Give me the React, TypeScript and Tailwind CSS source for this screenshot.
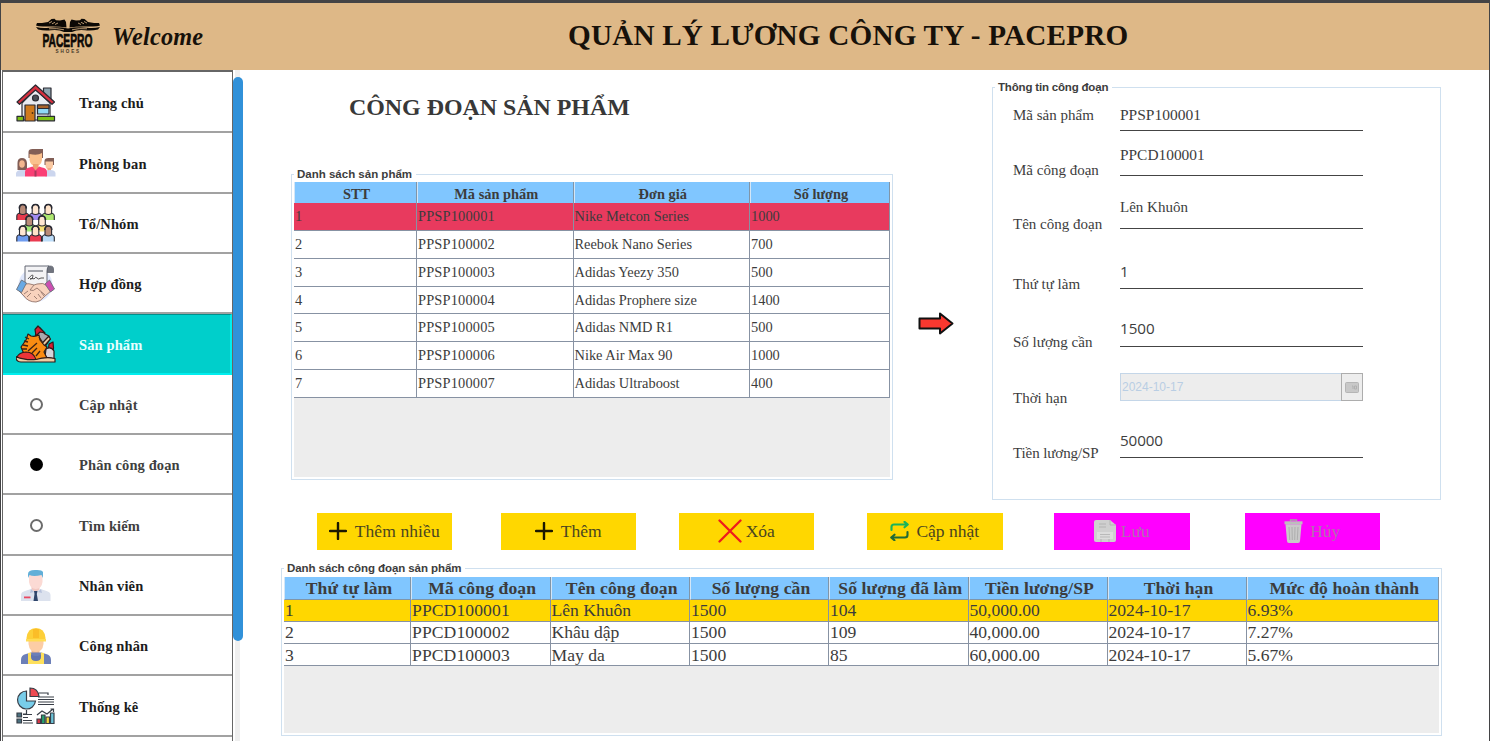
import type { ReactNode } from "react";

const serif = "font-['Liberation_Serif',serif]";

function Logo() {
  return (
    <svg className="h-[38px] w-[66px] shrink-0" viewBox="0 0 66 38" fill="#0c0905">
      <path d="M1 7.500 L2 5 L7 5 L13 4 L16.500 1 L19.500 .8 L21 2.200 L25 2.500 L29.500 1.500 L31 4 L31.500 9.500 Q25 8.500 18 8.500 L8 8.500 Q3 8.500 1 7.500Z" />
      <path d="M65 7.500 L64 5 L59 5 L53 4 L49.500 1 L46.500 .8 L45 2.200 L41 2.500 L36.500 1.500 L35 4 L34.500 9.500 Q41 8.500 48 8.500 L58 8.500 Q63 8.500 65 7.500Z" />
      <path d="M1 9 Q7 10.500 14 9.700 Q24 8.500 33 10.500 Q42 8.500 52 9.700 Q59 10.500 65 9 L63 11.500 Q57 13 50 12.300 Q42 11.500 37 14 L29 14 Q24 11.500 16 12.300 Q9 13 3 11.500Z" />
      <path d="M14 5 l3 -1.500 M17 5.800 l3 -1.500 M20 6.500 l3 -1.500 M52 5 l-3 -1.500 M49 5.800 l-3 -1.500 M46 6.500 l-3 -1.500 M14 10.800 Q22 10 29 11.800 M52 10.800 Q44 10 37 11.800" stroke="#deb887" strokeWidth=".8" fill="none" />
      <text transform="translate(7.500 29.300) scale(.56 1)" fontSize="18.300" fontWeight="bold" fontFamily="Liberation Sans, sans-serif" stroke="#0c0905" strokeWidth=".7">PACEPRO</text>
      <text x="20.500" y="35.300" fontSize="4.600" fontWeight="bold" fontFamily="Liberation Sans, sans-serif" letterSpacing="1.900" opacity=".75">SHOES</text>
    </svg>
  );
}

function Icon({ children }: { children: ReactNode }) {
  return <svg className="size-10" viewBox="0 0 40 40">{children}</svg>;
}

function HouseIcon() {
  return (
    <Icon>
      <g stroke="#2b2b33" strokeWidth="1.200" strokeLinejoin="round">
        <path d="M27.500 5h7.500v12h-7.500z" fill="#8fa5b0" />
        <path d="M6 20 19.500 6 34 20v17H6z" fill="#e9ebf0" />
        <path d="M31 21h3v13h-3z" fill="#b9c0ca" stroke="none" />
        <path d="M1 19 19.500 2 38.500 19l-2.500 2.300L19.500 7 3.500 21.300z" fill="#d9303f" />
        <circle cx="19.500" cy="15" r="3" fill="#4a4f57" />
        <path d="M9 22h10v16H9z" fill="#d07a1c" />
        <path d="M21.500 22h11.500v9H21.500z" fill="#8fd8f5" />
        <path d="M21.500 22h11.500v3.500H21.500z" fill="#a8632b" />
        <path d="M1 33.300h6.500v4.500H1zM21.500 33.300h17v4.500h-17z" fill="#7ec314" />
      </g>
      <circle cx="16.500" cy="30" r=".9" fill="#4a2c10" />
    </Icon>
  );
}

function StaffIcon() {
  return (
    <Icon>
      <path d="M1.500 27V20q0-5 4.500-5t5 5v7z" fill="#825e56" />
      <ellipse cx="6" cy="21" rx="2.800" ry="3.800" fill="#f2b690" />
      <path d="M0 33.500V30q1-3 5-3h4v6.500z" fill="#ccd6ee" />
      <path d="M28.500 22v-4q0-3 4-3h5.500v7z" fill="#825e56" />
      <path d="M29.500 18.500h7.500v4q0 4-3.700 4t-3.800-4z" fill="#fac9a2" />
      <path d="M31.500 25h3.500v4h-3.500z" fill="#f0ac85" />
      <path d="M29 33.500V29q1-2 5-2 5 0 5.500 3v3.500z" fill="#ccd6ee" />
      <path d="M12.500 15V9q0-3 4-3H27v9z" fill="#825e56" />
      <path d="M13.500 11q8 2 12.500-1v7q-1 6-6.200 6t-6.300-6z" fill="#fac08d" />
      <path d="M17 21h5.500v6H17z" fill="#eda071" />
      <path d="M9 33.500V29q0-4 4.500-4.500l3-1 3 4 3.500-4 3 1Q31 25 31 29v4.500z" fill="#fa3f75" />
      <path d="M18.500 27.500h2v6h-2z" fill="#a83a5c" />
    </Icon>
  );
}

function Person({ x, y, skin, shirt }: { x: number; y: number; skin: string; shirt: string }) {
  return (
    <g transform={`translate(${x} ${y})`} stroke="#292a33" strokeWidth="1.100">
      <path d="M-6 14.500V10.500Q-6 8 -2.500 7.500H2.500Q6 8 6 10.500V14.500" fill={shirt} />
      <path d="M-3.300 8V3Q-3.300 -1 0 -1T3.300 3V8Q0 10-3.300 8z" fill={skin} />
      <path d="M-3.500 3Q-3.500 -1 0 -1T3.500 3" fill="none" strokeWidth="1.600" />
    </g>
  );
}

function CrowdIcon() {
  return (
    <Icon>
      <Person x={6.8} y={2.5} skin="#b98b78" shirt="#e83a4c" />
      <Person x={19.5} y={2.5} skin="#ffe6d2" shirt="#a18af0" />
      <Person x={32.3} y={2.5} skin="#ffe3c8" shirt="#aee86f" />
      <Person x={13.3} y={14} skin="#b98b78" shirt="#a2ea78" />
      <Person x={26} y={14} skin="#ffe6d2" shirt="#f5df78" />
      <Person x={6.8} y={24} skin="#ffe6d2" shirt="#6f9cf0" />
      <Person x={19.5} y={24} skin="#ffe3c8" shirt="#ea3a50" />
      <Person x={32.3} y={24} skin="#b98b78" shirt="#bcdcf8" />
    </Icon>
  );
}

function ContractIcon() {
  return (
    <Icon>
      <circle cx="19.500" cy="21" r="17" fill="#dfe7fb" />
      <g stroke="#6a6e78" strokeWidth=".9" strokeLinejoin="round">
        <path d="M31 2.500q6-1.500 6.500 2v4H31z" fill="#70747e" />
        <path d="M9 2h24q-2 1-2 5v15H9z" fill="#f3f3f5" stroke="#555a66" />
        <path d="M12 7h15" strokeWidth="1.200" />
        <path d="M12 15q5-6 5-3 0 3-3 3 4-1 4 0 2-3 3-1t4 0h3" fill="none" stroke="#444" />
        <path d="M8 20q5-1 10 1l3-1q6-2 11 2l3 5-6 5q-5 6-9 6-8 0-12-6l-5-5z" fill="#f8d2bd" stroke="#94766c" />
        <path d="M18 21l-4 5q3 2 7-2l8 7M25 28l3 4M22 30l3 4M18 32l3 3M8 30l4-3M11 33l4-4" fill="none" stroke="#94766c" />
        <path d="M5.500 16l5 3-5 9.500-5-3z" fill="#69a9e4" />
        <path d="M33.500 16l-4.500 4 5.500 8 4-3z" fill="#cc4eb1" />
      </g>
    </Icon>
  );
}

function ShoesIcon() {
  return (
    <Icon>
      <g stroke="#2e1a18" strokeWidth="1.200" strokeLinejoin="round">
        <path d="M20 6l4-3 5 6 4 2 1 3-5 8-10-8z" fill="#a9a9ae" />
        <path d="M19 4.500l3-3.500 7 7-5-1-4 4z" fill="#d71f34" />
        <path d="M32.500 11.500l2 2.500-8 9-3-2z" fill="#e8c8a0" />
        <path d="M33 19l4-2 .5 6-1 6-4-5z" fill="#d71f34" />
        <path d="M30 24q5-3 8 2v8l-9-2z" fill="#d4d4da" />
        <path d="M12 9l3 2q4 1 8-1l1 5 4 5 3 2-3 5 3 6-12 2-11-6-3-7 5-7z" fill="#fa8c12" />
        <path d="M1 32q2-4.500 9-5 8 0 10 8H1z" fill="#eb3438" />
        <path d="M0 31.500q9 4 20 3 10-3 19-1v3.500H5Q0 37 0 31.500z" fill="#f0cda2" />
      </g>
      <path d="M9 12l4 2M8 16l4 1M7 20l5 1M6 24l5 0M12 26l9-8M16 28l5-5M20 31l4-5M23 12l4 6" stroke="#3e2214" strokeWidth="1.300" fill="none" />
    </Icon>
  );
}

function EmployeeIcon() {
  return (
    <Icon>
      <path d="M15.500 19h8v8h-8z" fill="#f1c7c0" />
      <path d="M13 9h13.500v8q-1 7-6.700 7T13 17z" fill="#fbdad4" />
      <path d="M12 13V9q0-4 7-4 7-.5 8 2v6l-1.500-3q-8 2-12 0z" fill="#62afd8" />
      <path d="M5 36v-6q0-3 4-4l6-2 4.500 3 5-3 6 2q4 1 4 4v6z" fill="#dce2ee" />
      <path d="M15 24l-1 4 4-1M25 24l1 4-4-1" fill="#b7c2dc" />
      <path d="M18 26h3.500l-.7 3 1.200 7h-4.500l1-7z" fill="#2e456b" />
      <path d="M8 31.500h6.500v1.800H8z" fill="#e94862" />
    </Icon>
  );
}

function WorkerIcon() {
  return (
    <Icon>
      <path d="M15.500 21h8v8h-8z" fill="#efb48c" />
      <path d="M12.500 12h15v6q-1 8-7.500 8t-7.500-8z" fill="#fccda5" />
      <path d="M10.500 15v-3q1-10 9.500-10t9.500 10v3z" fill="#fdcf38" />
      <path d="M17 3h6v9h-6z" fill="#fbbd28" />
      <path d="M10 13h20v2.500H10z" fill="#ffdc55" />
      <path d="M5 38v-4q0-5 5-6l5-1.500h10l5 1.500q5 1 5 6v4z" fill="#6c7fb8" />
      <path d="M12 27l3-.5q0 5 5 5t5-5l3 .5v11H12z" fill="#fee05c" />
      <path d="M15 27q0 3 5 3t5-3v4q0 4-5 4t-5-4z" fill="#6174af" />
    </Icon>
  );
}

function StatsIcon() {
  return (
    <Icon>
      <g stroke="#383e47" strokeWidth="1.200" fill="none">
        <path d="M10.500 5a9 9 0 1 0 9 10h-9z" fill="#78cdea" />
        <path d="M14 2q8 0 9 8.500h-9z" fill="#ee4b52" />
        <path d="M23 7h9v2M22 11h16M22 13.500h16M22 16h16M22 18.500h16M10.500 24v4H7M7 28.500h9M7 31.500h5M7 34.500h9M7 37h10" />
        <path d="M1 27h4.500v4H1zM1 33h4.500v4H1z" fill="#4b7180" />
        <path d="M21 33h3.500v4.500H21z" fill="#db3747" />
        <path d="M25.500 29H29v8.500h-3.500z" fill="#25a26f" />
        <path d="M30 31h3.500v6.500H30z" fill="#f4d83e" />
        <path d="M34.500 27H38v10.500h-3.500z" fill="#6bc3d8" />
        <path d="M21 29l5-4 5 3 6-5M34.500 23H37.500v3" />
      </g>
    </Icon>
  );
}

function Radio({ on }: { on?: boolean }) {
  return (
    <div className="flex size-10 items-center justify-center">
      <div className={on ? "size-[13px] rounded-full bg-black" : "size-[13px] rounded-full border-2 border-[#6c6c6c] bg-white"} />
    </div>
  );
}

const menu = [
  { label: "Trang chủ", icon: <HouseIcon />, tone: "text-[#1c1c1c]" },
  { label: "Phòng ban", icon: <StaffIcon />, tone: "text-[#1c1c1c]" },
  { label: "Tổ/Nhóm", icon: <CrowdIcon />, tone: "text-[#1c1c1c]" },
  { label: "Hợp đồng", icon: <ContractIcon />, tone: "text-[#1c1c1c]" },
  { label: "Sản phẩm", icon: <ShoesIcon />, tone: "text-[#e8ffff]", active: true },
  { label: "Cập nhật", icon: <Radio />, tone: "text-[#3f3f3f]" },
  { label: "Phân công đoạn", icon: <Radio on />, tone: "text-[#3f3f3f]" },
  { label: "Tìm kiếm", icon: <Radio />, tone: "text-[#3f3f3f]" },
  { label: "Nhân viên", icon: <EmployeeIcon />, tone: "text-[#1c1c1c]" },
  { label: "Công nhân", icon: <WorkerIcon />, tone: "text-[#1c1c1c]" },
  { label: "Thống kê", icon: <StatsIcon />, tone: "text-[#1c1c1c]" },
];

function Sidebar() {
  return (
    <nav className="flex h-full w-[231px] shrink-0 flex-col border-x border-t-2 border-[#666] bg-white pt-px">
      {menu.map((m) => (
        <div
          key={m.label}
          className={`flex h-[60.350px] shrink-0 items-center border-b-2 pt-px pl-[13px] ${
            m.active ? "border-r-2 border-t border-t-[#008f8c] border-r-[#00eeee] border-b-[#00eeee] bg-[#00cfcb]" : "border-[#a2a2a2]"
          }`}
        >
          {m.icon}
          <span className={`ml-[23px] whitespace-nowrap pt-[3px] text-[14.500px] font-bold tracking-[0.12px] ${m.tone}`}>{m.label}</span>
        </div>
      ))}
    </nav>
  );
}

function Group({ title, className, titleClass = "", children }: { title: string; className: string; titleClass?: string; children: ReactNode }) {
  return (
    <section className={`relative border border-[#cfe0ef] ${className}`}>
      <h2 className={`absolute -top-[9px] left-[2px] whitespace-nowrap bg-white pl-[3px] pr-[4px] font-['Liberation_Sans',sans-serif] text-[11.500px] leading-4 font-bold text-[#3d3d3d] ${titleClass}`}>
        {title}
      </h2>
      {children}
    </section>
  );
}

const productHead = ["STT", "Mã sản phẩm", "Đơn giá", "Số lượng"];
const products = [
  ["1", "PPSP100001", "Nike Metcon Series", "1000"],
  ["2", "PPSP100002", "Reebok Nano Series", "700"],
  ["3", "PPSP100003", "Adidas Yeezy 350", "500"],
  ["4", "PPSP100004", "Adidas Prophere size", "1400"],
  ["5", "PPSP100005", "Adidas NMD R1", "500"],
  ["6", "PPSP100006", "Nike Air Max 90", "1000"],
  ["7", "PPSP100007", "Adidas Ultraboost", "400"],
];

function ProductTable() {
  const cols = "grid grid-cols-[123px_156.500px_176.500px_140px]";
  return (
    <div className="flex h-full flex-col bg-[#ededed] text-[14.400px] text-[#3c3c3c]">
      <div className={`${cols} h-[21px] bg-[#80c6ff] font-bold`}>
        {productHead.map((h) => (
          <div key={h} className="flex items-center justify-center border-r border-b border-l border-[#8095a8] border-l-[#d3e6f7] pt-[2px] pl-[2px] leading-5">{h}</div>
        ))}
      </div>
      {products.map((r, i) => (
        <div key={r[0]} className={`${cols} h-[27.850px] ${i === 0 ? "bg-[#e83a5e]" : "bg-white"}`}>
          {r.map((c, j) => (
            <div key={j} className={`flex items-center whitespace-nowrap border-r border-b border-[#8792a3] pt-px pl-[1px] ${j === 1 ? "tracking-[0.17px]" : ""}`}>{c}</div>
          ))}
        </div>
      ))}
    </div>
  );
}

const stageHead = ["Thứ tự làm", "Mã công đoạn", "Tên công đoạn", "Số lượng cần", "Số lượng đã làm", "Tiền lương/SP", "Thời hạn", "Mức độ hoàn thành"];
const stages = [
  ["1", "PPCD100001", "Lên Khuôn", "1500", "104", "50,000.00", "2024-10-17", "6.93%"],
  ["2", "PPCD100002", "Khâu dập", "1500", "109", "40,000.00", "2024-10-17", "7.27%"],
  ["3", "PPCD100003", "May da", "1500", "85", "60,000.00", "2024-10-17", "5.67%"],
];

function StageTable() {
  const cols = "grid grid-cols-[127px_139.500px_139.500px_139px_139.500px_139px_139px_192.500px]";
  return (
    <div className="flex h-full flex-col bg-[#ededed] text-[17.600px] text-[#3c3c3c]">
      <div className={`${cols} h-[22.500px] bg-[#80c6ff] font-bold`}>
        {stageHead.map((h) => (
          <div key={h} className="flex items-center justify-center whitespace-nowrap border-r border-b border-l border-[#8095a8] border-l-[#d3e6f7] pl-[3px] leading-5 tracking-[0.1px]">{h}</div>
        ))}
      </div>
      {stages.map((r, i) => (
        <div key={r[0]} className={`${cols} h-[22.300px] ${i === 0 ? "bg-[#ffd700]" : "bg-white"}`}>
          {r.map((c, j) => (
            <div key={j} className={`flex items-center whitespace-nowrap border-r border-b border-[#8792a3] pl-[1px] leading-5 ${j === 1 ? "tracking-[0.1px]" : ""}`}>{c}</div>
          ))}
        </div>
      ))}
    </div>
  );
}

function Field({ label, value, row, labelPad = "", valuePad, valueFont = "text-[15px]" }: { label: string; value: string; row: string; labelPad?: string; valuePad: string; valueFont?: string }) {
  return (
    <div className={`flex items-end ${row}`}>
      <span className={`w-[107px] whitespace-nowrap leading-5 ${labelPad}`}>{label}</span>
      <div className={`mb-[5px] w-[243px] border-b border-[#444] leading-5 ${valuePad} ${valueFont}`}>{value}</div>
    </div>
  );
}

const sans = "font-['Open_Sans',sans-serif] text-[15.200px]";

function StageForm() {
  return (
    <Group title="Thông tin công đoạn" titleClass="tracking-[-0.18px]" className="mt-[17px] h-[413px] w-[449px] pl-[20px] text-[15px] text-[#3d3d3d]">
      <Field label="Mã sản phẩm" value="PPSP100001" row="h-[48px]" labelPad="pb-[11px]" valuePad="pb-[5px]" valueFont="text-[15.500px]" />
      <Field label="Mã công đoạn" value="PPCD100001" row="h-[45px]" labelPad="pb-px" valuePad="pb-[10px]" valueFont="text-[15.400px]" />
      <Field label="Tên công đoạn" value="Lên Khuôn" row="h-[53px]" valuePad="pb-[11px]" />
      <Field label="Thứ tự làm" value="1" row="h-[60px]" valuePad="pb-[7px]" valueFont={sans} />
      <Field label="Số lượng cần" value="1500" row="h-[58px]" valuePad="pb-[8px]" valueFont={sans} />
      <div className="flex h-[56px] items-end">
        <span className="w-[107px] leading-5">Thời hạn</span>
        <div className="mb-[7px] flex h-[28px] w-[243px] items-center border border-[#c4d6e8] bg-[#ededed] pl-px font-['Liberation_Sans',sans-serif] text-[12px] text-[#b9cee4]">
          <span className="flex-1">2024-10-17</span>
          <div className="-my-px -mr-px flex h-[28px] w-[22px] items-center justify-center border border-[#adadad]">
            <svg className="h-[11px] w-[14px]" viewBox="0 0 14 11">
              <rect x=".5" y=".5" width="13" height="10" rx="1" fill="#c8c8c8" stroke="#b5b5b5" />
              <path d="M7 4h1v3M9.500 4h2v3h-2z" stroke="#b0b0b0" fill="none" />
            </svg>
          </div>
        </div>
      </div>
      <Field label="Tiền lương/SP" value="50000" row="h-[55px] tracking-[-0.1px]" valuePad="pb-[7px]" valueFont={sans} />
    </Group>
  );
}

function Plus() {
  return (
    <svg className="size-[18px]" viewBox="0 0 18 18" stroke="#1c1800" strokeWidth="2.400" strokeLinecap="round">
      <path d="M9 1v16M1 9h16" />
    </svg>
  );
}

function Btn({ label, icon, className }: { label: string; icon: ReactNode; className: string }) {
  return (
    <button className={`flex h-[37px] w-[135.500px] items-center justify-center whitespace-nowrap text-[17.500px] ${className}`}>
      {icon}
      <span className="pt-px">{label}</span>
    </button>
  );
}

function Actions() {
  const gold = "bg-[#ffd700] text-[#4a4520]";
  const pink = "bg-[#ff00ff] text-[#b06cb0]";
  return (
    <div className="mt-[11.500px] flex pl-[73.500px]">
      <Btn label="Thêm nhiều" icon={<Plus />} className={`gap-2 tracking-[0.1px] ${gold}`} />
      <Btn label="Thêm" icon={<Plus />} className={`ml-[48.500px] gap-2 ${gold}`} />
      <Btn
        label="Xóa"
        className={`ml-[42.500px] gap-1 ${gold}`}
        icon={
          <svg className="size-6" viewBox="0 0 24 24" stroke="#ee1c1c" strokeWidth="2.300" strokeLinecap="round">
            <path d="M1.500 1.500l21 21M22.500 1.500l-21 21" />
          </svg>
        }
      />
      <Btn
        label="Cập nhật"
        className={`ml-[53px] gap-[7px] ${gold}`}
        icon={
          <svg className="h-5 w-[19px]" viewBox="0 0 19 20" fill="none" strokeWidth="2.100" strokeLinejoin="round" strokeLinecap="round">
            <path d="M1.500 9V6q0-2.500 2.500-2.500H17.500M14.500 .9 17.800 3.500 14.500 6.300" stroke="#18b35c" />
            <path d="M17.500 11v3q0 2.500-2.500 2.500H1.500M4.500 13.700 1.200 16.500l3.300 2.800" stroke="#236b35" />
          </svg>
        }
      />
      <Btn
        label="Lưu"
        className={`ml-[51.500px] gap-[5px] ${pink}`}
        icon={
          <svg className="h-[22px] w-[22px]" viewBox="0 0 22 22">
            <path d="M2 0h14l6 5v15q0 2-2 2H2q-2 0-2-2V2q0-2 2-2z" fill="#cfcfcf" />
            <path d="M16 0v5h6M4 12.500h14M5 4h7M5 7h7M4 18h3v4M15 22v-4h3" stroke="#b3b3b3" fill="none" />
            <path d="M3 12h16v7H3z" fill="#dcdcdc" />
            <path d="M6 14.500h10M6 17h10" stroke="#b9b9b9" />
          </svg>
        }
      />
      <Btn
        label="Hủy"
        className={`ml-[55px] gap-[7px] ${pink}`}
        icon={
          <svg className="h-6 w-[19px]" viewBox="0 0 19 24">
            <path d="M6.500 2.500V1h6v1.500" fill="none" stroke="#a9a9a9" strokeWidth="1.300" />
            <path d="M.5 2.300h18v3H.5z" fill="#bdbdbd" />
            <path d="M1.500 5.300h16l-1.500 16.700q0 2-2 2H5q-2 0-2-2z" fill="#c9c9c9" />
            <path d="M5 8l.7 13M8 8l.3 13M11 8l-.3 13M14 8l-.7 13" stroke="#aeaeae" strokeWidth="1" />
          </svg>
        }
      />
    </div>
  );
}

export default function App() {
  return (
    <div className={`flex h-[741px] w-[1490px] flex-col overflow-hidden border-x border-t-[3px] border-[#434345] bg-white ${serif}`}>
      <header className="flex h-[67px] shrink-0 items-center bg-[#deb887]">
        <div className="flex w-[567px] items-center pl-[34px]">
          <Logo />
          <span className="ml-[11px] text-[24.300px] leading-8 font-bold tracking-[0.2px] italic text-[#17110a]">Welcome</span>
        </div>
        <h1 className="whitespace-nowrap pb-[3px] text-[29.200px] leading-9 font-bold tracking-[0.19px] text-[#17110a]">QUẢN LÝ LƯƠNG CÔNG TY - PACEPRO</h1>
      </header>
      <div className="flex min-h-0 flex-1 pl-px">
        <Sidebar />
        <div className="flex w-[10px] shrink-0 flex-col items-center bg-[linear-gradient(to_right,transparent_2px,#efefef_2px,#efefef_7px,transparent_7px)] pt-[7px]">
          <div className="h-[564px] w-[10px] rounded-full bg-[#3191d9]" />
        </div>
        <main className="flex min-w-0 flex-1 flex-col">
          <div className="flex h-[431px] shrink-0">
            <div className="w-[650px] pl-[48px]">
              <h2 className="pt-[21px] pl-[58px] text-[23.900px] leading-8 font-bold text-[#383838]">CÔNG ĐOẠN SẢN PHẨM</h2>
              <Group title="Danh sách sản phẩm" className="mt-[51px] h-[306px] w-[602px] px-[2px] pt-[7px] pb-[2px]">
                <ProductTable />
              </Group>
            </div>
            <div className="flex w-[99px] justify-center pt-[242px]">
              <svg className="ml-[-13px] h-[23px] w-[36px]" viewBox="0 0 36 23">
                <path d="M1.500 6.500H22V1.500L34.500 11.500 22 21.500V16.500H1.500z" fill="#f9382f" stroke="#111" strokeWidth="2" strokeLinejoin="round" />
              </svg>
            </div>
            <StageForm />
          </div>
          <Actions />
          <Group title="Danh sách công đoạn sản phẩm" titleClass="tracking-[-0.07px]" className="mt-[18.500px] ml-[38px] h-[168px] w-[1161px] px-[2px] pt-[8px] pb-[2px]">
            <StageTable />
          </Group>
        </main>
      </div>
    </div>
  );
}
